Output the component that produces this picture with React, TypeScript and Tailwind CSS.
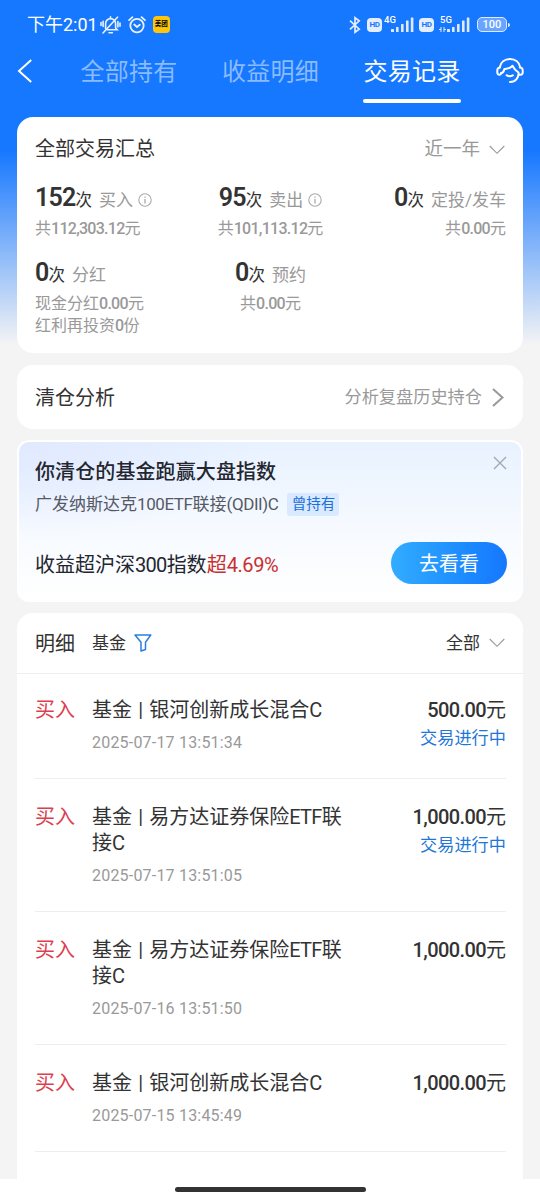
import type { ReactNode } from "react";

type Stat = {
  count: string;
  label: string;
  info?: boolean;
  lines: string[];
  align: string;
};

const stats: Stat[] = [
  { count: "152", label: "买入", info: true, lines: ["共112,303.12元"], align: "items-start" },
  { count: "95", label: "卖出", info: true, lines: ["共101,113.12元"], align: "items-center" },
  { count: "0", label: "定投/发车", lines: ["共0.00元"], align: "items-end" },
  { count: "0", label: "分红", lines: ["现金分红0.00元", "红利再投资0份"], align: "items-start" },
  { count: "0", label: "预约", lines: ["共0.00元"], align: "items-center" },
];

const records = [
  { name: "基金 | 银河创新成长混合C", time: "2025-07-17 13:51:34", amount: "500.00", pending: true, height: "h-[105px] pt-[23px]" },
  { name: "基金 | 易方达证券保险ETF联接C", time: "2025-07-17 13:51:05", amount: "1,000.00", pending: true, height: "h-[133px] pt-[25px]" },
  { name: "基金 | 易方达证券保险ETF联接C", time: "2025-07-16 13:51:50", amount: "1,000.00", pending: false, height: "h-[133px] pt-[25px]" },
  { name: "基金 | 银河创新成长混合C", time: "2025-07-15 13:45:49", amount: "1,000.00", pending: false, height: "h-[107px] pt-[25px]" },
];

// Tightens latin letters and digits that sit between Chinese characters
function Mixed({ children, className = "tracking-[-0.035em]" }: { children: string; className?: string }) {
  return (
    <>
      {children.split(/([\x21-\x7e]+)/).map((part, i) =>
        i % 2 === 1 ? (
          <span key={i} className={part === "|" ? "mx-[1.2px]" : className}>
            {part}
          </span>
        ) : (
          part
        )
      )}
    </>
  );
}

function ChevronDown() {
  return (
    <svg width="16" height="10" viewBox="0 0 16 10" fill="none" stroke="#999" strokeWidth="1.1">
      <path d="M0.7 1 8 8.3 15.3 1" />
    </svg>
  );
}

function InfoIcon() {
  return (
    <svg width="14" height="14" viewBox="0 0 14 14" fill="none" stroke="#aaa" strokeWidth="1.1">
      <circle cx="7" cy="7" r="6.2" />
      <path d="M7 6v4.5M7 3.4v1.4" strokeWidth="1.3" />
    </svg>
  );
}

function Signal() {
  return (
    <svg width="23" height="15" viewBox="0 0 23 15" fill="#dfeaff">
      <rect x="0" y="12" width="3" height="3" rx="0.5" />
      <rect x="5" y="10" width="2.6" height="5" rx="0.5" />
      <rect x="10" y="7" width="2.6" height="8" rx="0.5" />
      <rect x="15" y="3.5" width="2.6" height="11.5" rx="0.5" />
      <rect x="19.8" y="0.5" width="2.6" height="14.5" rx="0.5" />
    </svg>
  );
}

function HdBadge() {
  return (
    <span className="flex h-[14px] w-[15px] items-center justify-center rounded-[4px] bg-[#e4eeff] text-[8px] font-bold leading-none tracking-[-0.3px] text-[#1677ff]">
      HD
    </span>
  );
}

function StatusBar() {
  return (
    <div className="flex h-[49px] items-center pl-[27px] pr-[30px] text-white">
      <span className="pt-px text-[18px] leading-[24px]">下午2:01</span>
      {/* muted bell */}
      <svg className="ml-[2px]" width="21" height="18" viewBox="0 0 21 18" fill="none" stroke="#eaf2ff" strokeWidth="1.6" strokeLinecap="round">
        <path d="M5.6 12.500V7.800a5 5 0 0 1 5-5.200 5 5 0 0 1 5 5.200V12l1.600 1.800H7.200" />
        <path d="M10.500.9v1.500M9 16.700h3.400M3 17 17.500 1.200M1 6.500v3M3.100 5.200v5.200M20 7v3.200M17.900 5.500V11" />
      </svg>
      {/* alarm clock */}
      <svg className="ml-[7px]" width="18" height="18" viewBox="0 0 18 18" fill="none" stroke="#eaf2ff" strokeWidth="1.8" strokeLinecap="round">
        <circle cx="9" cy="9.6" r="6.7" />
        <path d="M1.1 4.2 4.4 1.2M16.9 4.2 13.6 1.2M6.2 8.5 9 11l2.8-2.3" />
      </svg>
      <span className="ml-[7px] flex h-[17px] w-[17px] items-center justify-center rounded-[4px] bg-[#fec50b] text-[6.5px] font-bold leading-none text-black">
        美团
      </span>

      <div className="ml-auto flex items-center">
        <svg width="12" height="18" viewBox="0 0 12 18" fill="none" stroke="#e4eeff" strokeWidth="1.7">
          <path d="m1 4.700 9.200 8.500L6 16.300V1.700l4.200 3.100L1 13.300" />
        </svg>
        <span className="ml-[6px]">
          <HdBadge />
        </span>
        <span className="relative ml-[9px] block h-[15px] w-[23px]">
          <Signal />
          <span className="absolute left-[-7px] top-[-2px] text-[9.500px] font-medium leading-none">4G</span>
        </span>
        <span className="ml-[5px]">
          <HdBadge />
        </span>
        <span className="relative ml-[13px] block h-[15px] w-[23px]">
          <Signal />
          <span className="absolute left-[-7px] top-[-2px] text-[9.500px] font-medium leading-none">5G</span>
          <svg className="absolute bottom-0 left-[-8px]" width="7" height="5" viewBox="0 0 7 5" stroke="#dfeaff">
            <path d="M2 0v5M0 2.500h2M5 0v5M5 2.500h2" />
          </svg>
        </span>
        <span className="ml-[7px] flex h-[15px] w-[30px] items-center justify-center rounded-[5px] border-[1.5px] border-[#dfeaff] bg-[#69a5ff] text-[11px] font-medium leading-none">
          100
        </span>
        <span className="ml-px h-[4px] w-[2px] rounded-r bg-[#dfeaff]" />
      </div>
    </div>
  );
}

function Tab({ active, children }: { active?: boolean; children: ReactNode }) {
  return (
    <div className={`flex w-[98px] flex-col items-center ${active ? "text-white" : "text-[#8bbbff]"}`}>
      <span className="whitespace-nowrap text-[24px] leading-[36px] tracking-[0.3px]">{children}</span>
      {active && <span className="mt-[9px] h-[3.500px] w-full rounded-full bg-white" />}
    </div>
  );
}

function NavBar() {
  return (
    <div className="flex h-[68px] pt-[5px]">
      <svg className="ml-[17px] mt-[5px]" width="16" height="24" viewBox="0 0 16 24" fill="none" stroke="#fff" strokeWidth="2">
        <path d="M14.200 1 2 12l12.200 11" />
      </svg>
      <div className="ml-[47px] flex gap-[43.500px]">
        <Tab>全部持有</Tab>
        <Tab>收益明细</Tab>
        <Tab active>交易记录</Tab>
      </div>
      {/* customer service headset */}
      <svg className="ml-[35px] mt-[3px]" width="28" height="28" viewBox="0 0 28 28" fill="none" stroke="#fff" strokeWidth="2" strokeLinecap="round" strokeLinejoin="round">
        <path d="M3.700 10.500C4.500 5.300 8.700 2 14 2s9.500 3.300 10.300 8.500" />
        <path d="M3.700 10.500C2 10.700 1.300 11.800 1.300 13.500v1.700c0 1.500.9 2.500 2.400 2.500.9 0 1.300-.5 1.300-1.400" />
        <path d="M24.300 10.500c1.700.2 2.400 1.300 2.400 3v1.700c0 1.500-.9 2.500-2.400 2.500h-1" />
        <path d="M5 16.300c2.100-.3 3-2 3.400-4.300 2.800.1 5.600-.7 8.200-3.200 1.200 2.900 3.600 5 5.900 6.700.6 5-3 9.300-8.500 9.500" />
        <path d="M10.600 18.200c1.900 1.300 4.200 1.300 6.200.1" />
      </svg>
    </div>
  );
}

function Summary() {
  return (
    <section className="h-[236px] rounded-[16px] bg-white pl-[18px] pr-[17px] pt-[16px]">
      <div className="flex h-[32px] items-center justify-between">
        <h2 className="text-[20px] text-[#333]">全部交易汇总</h2>
        <span className="flex items-center gap-[9px] pr-px pt-px text-[18.500px] text-[#999]">
          近一年
          <ChevronDown />
        </span>
      </div>
      <div className="mt-[17px] grid grid-cols-3 gap-y-[17.500px]">
        {stats.map((s) => (
          <div key={s.label} className={`flex flex-col whitespace-nowrap ${s.align}`}>
            <div className="flex h-[32px] items-baseline text-[17px] leading-[32px] text-[#333]">
              <span className="text-[25px] font-semibold tracking-[-0.8px]">{s.count}</span>
              <span className="text-[16.500px]">次</span>
              <span className="ml-[7px] text-[#999]">{s.label}</span>
              {s.info && (
                <span className="ml-[5px] self-center pt-[4px]">
                  <InfoIcon />
                </span>
              )}
            </div>
            <div className="mt-[4px]">
              {s.lines.map((line) => (
                <p key={line} className="text-[16px] leading-[21.500px] text-[#999]">
                  <Mixed className="font-medium tracking-[-0.045em]">{line}</Mixed>
                </p>
              ))}
            </div>
          </div>
        ))}
      </div>
    </section>
  );
}

function Analysis() {
  return (
    <section className="mt-[12px] flex h-[64px] items-center justify-between rounded-[16px] bg-white px-[18px] pt-px">
      <h2 className="pt-px text-[20px] text-[#333]">清仓分析</h2>
      <span className="flex items-center gap-[9px] text-[17.200px] text-[#999]">
        分析复盘历史持仓
        <svg width="14" height="19" viewBox="0 0 14 19" fill="none" stroke="#999" strokeWidth="2">
          <path d="m2 1 9.500 8.500L2 18" />
        </svg>
      </span>
    </section>
  );
}

function Banner() {
  return (
    <section className="relative mt-[11px] h-[162px] rounded-[12px] border-2 border-white bg-[radial-gradient(ellipse_50%_60%_at_0_0,#e0e9ff,transparent),linear-gradient(#e8f2ff,#f5f9ff_50%,#fff)] pl-[16px] pr-[15px] pt-[15px] text-[#23262f]">
      <h2 className="text-[20px] font-medium leading-[30px] tracking-[0.1px]">你清仓的基金跑赢大盘指数</h2>
      <div className="mt-[4px] flex items-center">
        <span className="text-[17px] leading-[26px] text-[#555a66]">
          <Mixed className="tracking-[-0.025em]">广发纳斯达克100ETF联接(QDII)C</Mixed>
        </span>
        <span className="ml-[9px] h-[23px] w-[52px] rounded-[3px] bg-[#d9e9ff] text-center text-[14.500px] leading-[23px] text-[#1b70dc]">
          曾持有
        </span>
      </div>
      <div className="mt-[25px] flex h-[42px] items-center justify-between">
        <span className="pt-[3px] text-[20px]">
          <Mixed>收益超沪深300指数</Mixed>
          <span className="text-[#c92f2f]">
            <Mixed className="tracking-[-0.02em]">超4.69%</Mixed>
          </span>
        </span>
        <button className="mr-[-1px] h-[42px] w-[116px] rounded-full bg-gradient-to-r from-[#32acff] to-[#1677ff] pt-px text-[20px] text-white">
          去看看
        </button>
      </div>
      <svg className="absolute right-[14px] top-[14px]" width="14" height="14" viewBox="0 0 14 14" stroke="#a0a8b5" strokeWidth="1.4">
        <path d="m1 1 12 12M13 1 1 13" />
      </svg>
    </section>
  );
}

function Records() {
  return (
    <section className="mt-[11px] h-[566px] rounded-t-[16px] bg-white">
      <div className="flex h-[61px] items-center border-b border-[#eee] px-[18px] text-[#333]">
        <h2 className="pt-[2px] text-[20px]">明细</h2>
        <span className="ml-[17px] pt-px text-[17px]">基金</span>
        <svg className="ml-[8px]" width="18" height="18" viewBox="0 0 18 18" fill="none" stroke="#2b7de0" strokeWidth="1.5" strokeLinejoin="round">
          <path d="M1 1h15.800l-5.300 7.200v7.300L7 17V8.200L1 1Z" />
        </svg>
        <span className="ml-auto mr-[9px] pt-px text-[17px]">全部</span>
        <ChevronDown />
      </div>
      <ul className="pl-[18px] pr-[17px]">
        {records.map((r) => (
          <li key={r.time} className={`flex border-b border-[#eee] text-[20px] leading-[26px] text-[#333] ${r.height}`}>
            <span className="w-[57px] shrink-0 text-[#dc3f50]">买入</span>
            <div className="w-[258px]">
              <p>
                <Mixed>{r.name}</Mixed>
              </p>
              <p className="mt-[8px] text-[16px] leading-[24px] tracking-[0.2px] text-[#999]">{r.time}</p>
            </div>
            <div className="ml-auto text-right">
              <p className="whitespace-nowrap">
                <span className="font-medium tracking-[-0.6px]">{r.amount}</span>元
              </p>
              {r.pending && <p className="mt-[2px] text-[17.200px] text-[#1f78d8]">交易进行中</p>}
            </div>
          </li>
        ))}
      </ul>
    </section>
  );
}

export default function App() {
  return (
    <div className="h-[1200px] w-[540px] overflow-hidden bg-[#f4f4f4] bg-[linear-gradient(#1677ff_0,#1677ff_150px,#f4f4f4_345px)] font-[Roboto,'Noto_Sans_CJK_SC',sans-serif]">
      <StatusBar />
      <NavBar />
      <main className="px-[17px]">
        <Summary />
        <Analysis />
        <Banner />
        <Records />
      </main>
      <div className="flex h-[21px] justify-center bg-white pt-[8px]">
        <span className="h-[5px] w-[191px] rounded-full bg-[#333]" />
      </div>
    </div>
  );
}
